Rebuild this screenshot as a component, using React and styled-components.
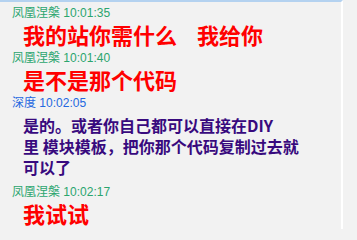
import React from 'react';
import styled, { createGlobalStyle } from 'styled-components';

const GlobalStyle = createGlobalStyle`
  html, body {
    margin: 0;
    padding: 0;
    background: #f2f2f2;
  }
`;

const Panel = styled.div`
  box-sizing: border-box;
  width: 343px;
  height: 229px;
  padding-top: 2.5px;
  background: #f2f2f2;
  border-top: 2px solid #b4d2f0;
  border-right: 2px solid #ffffff;
  overflow: hidden;
`;

const Entry = styled.div`
  margin-bottom: 2px;
`;

const Header = styled.div`
  padding-left: 12px;
  font-family: "Liberation Sans", "Noto Sans CJK SC", sans-serif;
  font-size: 12px;
  line-height: 16px;
  color: ${props => props.$color};
  white-space: nowrap;
`;

const Message = styled.div`
  font-family: "Noto Sans CJK SC", sans-serif;
  font-weight: 700;
  white-space: pre;
  padding-left: 23px;
  font-size: ${props => props.$big ? '22px' : '16px'};
  line-height: ${props => props.$big ? '27px' : '21px'};
  color: ${props => props.$big ? '#ff0000' : '#380a7e'};
  padding-top: ${props => props.$big ? '0' : '4px'};
  padding-bottom: ${props => props.$big ? '0' : '4.5px'};
  word-spacing: ${props => props.$big ? '5px' : '0'};
`;

const messages = [
  { name: '凤凰涅槃', time: '10:01:35', color: '#2ba56e', big: true, lines: ['我的站你需什么  我给你'] },
  { name: '凤凰涅槃', time: '10:01:40', color: '#2ba56e', big: true, lines: ['是不是那个代码'] },
  {
    name: '深度',
    time: '10:02:05',
    color: '#2468e0',
    big: false,
    lines: ['是的。或者你自己都可以直接在DIY', '里 模块模板，把你那个代码复制过去就', '可以了'],
  },
  { name: '凤凰涅槃', time: '10:02:17', color: '#2ba56e', big: true, lines: ['我试试'] },
];

export default function App() {
  return (
    <>
      <GlobalStyle />
      <Panel>
        {messages.map((m, i) => (
          <Entry key={i}>
            <Header $color={m.color}>
              {m.name} {m.time}
            </Header>
            <Message $big={m.big}>
              {m.lines.map((line, j) => (
                <div key={j}>{line}</div>
              ))}
            </Message>
          </Entry>
        ))}
      </Panel>
    </>
  );
}
